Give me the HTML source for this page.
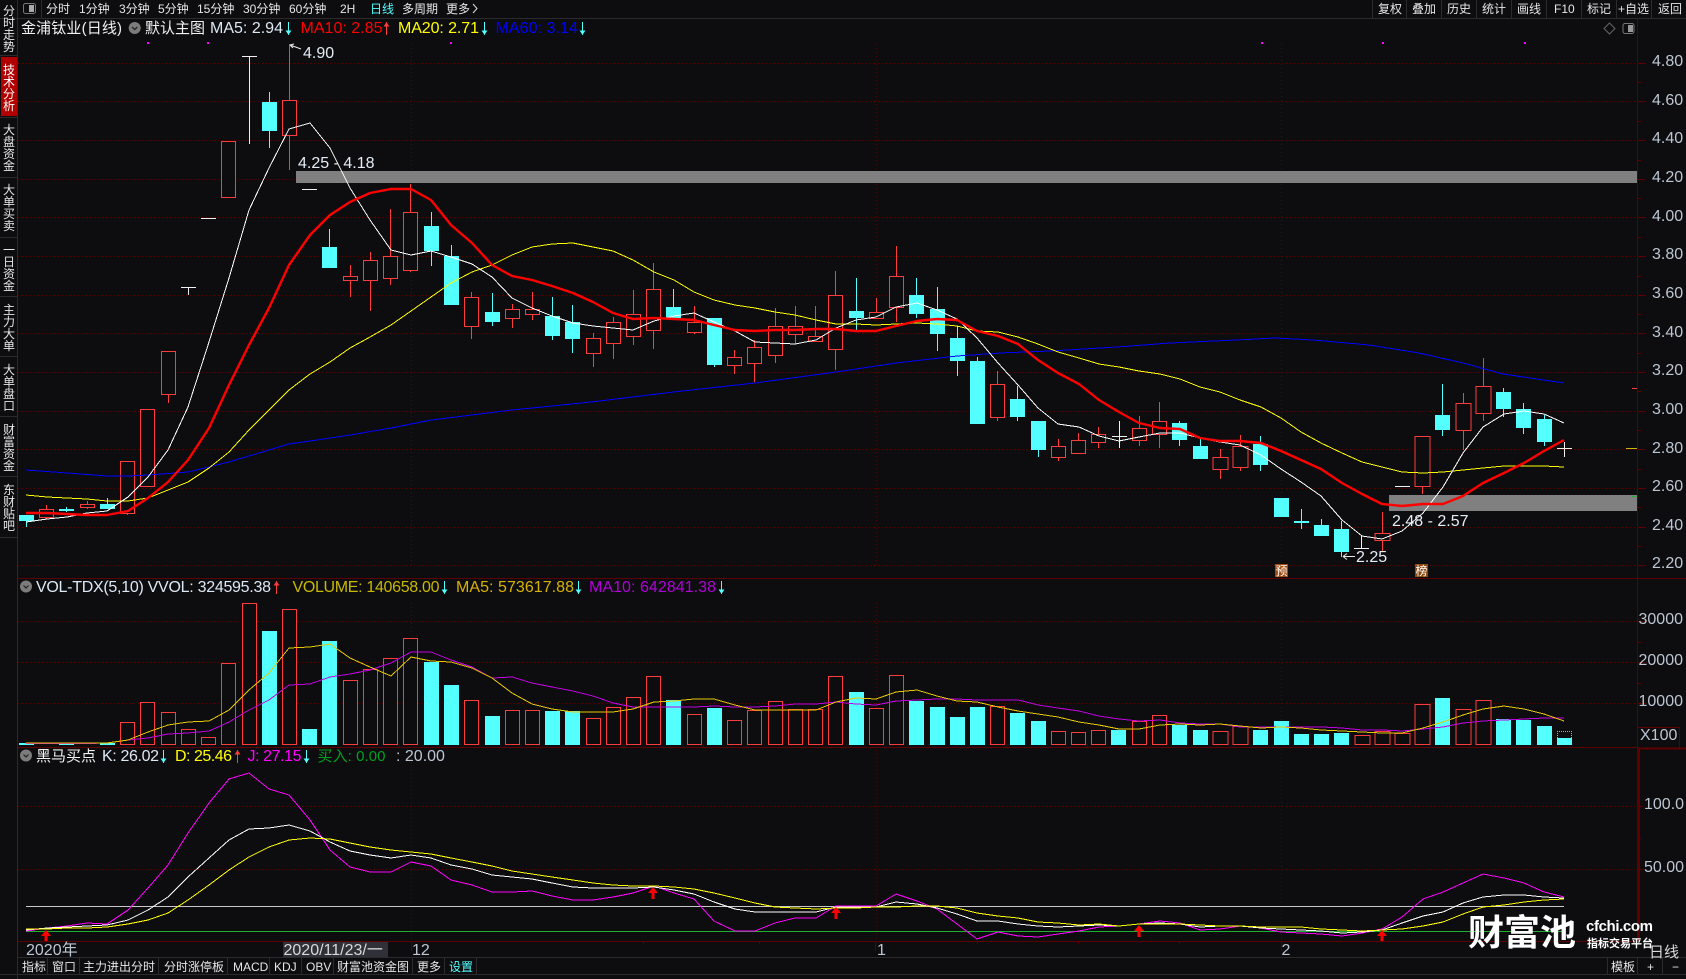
<!DOCTYPE html>
<html lang="zh"><head><meta charset="utf-8"><title>金浦钛业(日线)</title>
<style>
html,body{margin:0;padding:0;background:#0d0d10;width:1686px;height:979px;overflow:hidden}
svg{display:block;position:absolute;left:0;top:0}
text{font-family:"Liberation Sans","WenQuanYi Zen Hei","Noto Sans CJK SC",sans-serif;font-size:16px;white-space:pre}
.c{font-size:12px;fill:#e6e6e6}
.a{fill:#bcc6d2}
.s{font-size:12px;fill:#e6e6e6}
</style></head><body>
<svg width="1686" height="979" viewBox="0 0 1686 979">
<rect width="1686" height="979" fill="#0d0d10"/>

<!-- grid -->
<g stroke="#5c0000" stroke-width="1" stroke-dasharray="1 3" fill="none" shape-rendering="crispEdges">
<path d="M18 63.5H1637M18 101.5H1637M18 140.5H1637M18 179.5H1637M18 217.5H1637M18 256.5H1637M18 295.5H1637M18 333.5H1637M18 372.5H1637M18 411.5H1637M18 449.5H1637M18 488.5H1637M18 527.5H1637M18 565.5H1637"/>
<path d="M18 621.5H1637M18 662.5H1637M18 703.5H1637M18 806.5H1637M18 869.5H1637"/>
<path d="M411.5 44V566M876.5 44V566M1281.5 44V566M411.5 603V745M876.5 603V745M1281.5 603V745M411.5 750V941M876.5 750V941M1281.5 750V941"/>
</g>

<!-- frame lines -->
<g fill="none" shape-rendering="crispEdges">
<path stroke="#5c0000" d="M17 578.5H1686M17 747.5H1638M17 941.5H1638M1637.5 19V941"/>
<path stroke="#600000" stroke-width="2" d="M1639 748V941M1639 748.5H1686"/>
<path stroke="#5c0000" d="M1638 63.5h7M1638 101.5h7M1638 140.5h7M1638 179.5h7M1638 217.5h7M1638 256.5h7M1638 295.5h7M1638 333.5h7M1638 372.5h7M1638 411.5h7M1638 449.5h7M1638 488.5h7M1638 527.5h7M1638 565.5h7M1638 82.5h3M1638 121.5h3M1638 160.5h3M1638 198.5h3M1638 237.5h3M1638 276.5h3M1638 314.5h3M1638 353.5h3M1638 391.5h3M1638 430.5h3M1638 469.5h3M1638 507.5h3M1638 546.5h3M1638 621.5h7M1638 662.5h7M1638 703.5h7M1638 642.5h3M1638 683.5h3M1638 806.5h5M1638 869.5h5M1638 838.5h3M643.5 941v3M759.5 941v3M875.5 941v10M977.5 941v3M1078.5 941v3M1179.5 941v3M411.5 941v10M1281.5 941v10"/>
<path stroke="#5c0000" d="M1638 727.5h41.5v20"/>
<path stroke="#2b2b2e" d="M0 18.5H1686M18 957.5H1686M0 974.5H1686M17.5 0V979M41.5 0V18M1372.5 0V18M1406.5 0V18M1441.5 0V18M1476.5 0V18M1511.5 0V18M1546.5 0V18M1581.5 0V18M1616.5 0V18M1651.5 0V18M47.5 957V974M79.5 957V974M158.5 957V974M227.5 957V974M269.5 957V974M301.5 957V974M333.5 957V974M412.5 957V974M444.5 957V974M476.5 957V974M1607.5 957V974M1637.5 957V974M1662.5 957V974M0 55.5H17M0 117.5H17M0 177.5H17M0 237.5H17M0 296.5H17M0 356.5H17M0 416.5H17M0 476.5H17M0 537.5H17"/>
</g>

<!-- gray bands -->
<rect x="296" y="171" width="1341" height="12" fill="#808080"/>
<rect x="1389" y="495" width="248" height="16" fill="#808080"/>

<!-- side marks -->
<g shape-rendering="crispEdges">
<rect x="1632" y="388" width="5" height="1" fill="#ff3c3c"/>
<rect x="1626" y="448" width="11" height="1" fill="#c8b800"/>
<rect x="1632" y="496" width="5" height="1" fill="#20b040"/>
<rect x="147" y="42" width="2" height="2" fill="#ff00ff"/><rect x="207" y="42" width="2" height="2" fill="#ff00ff"/><rect x="450" y="42" width="2" height="2" fill="#ff00ff"/><rect x="1261" y="42" width="2" height="2" fill="#ff00ff"/><rect x="1382" y="42" width="2" height="2" fill="#ff00ff"/><rect x="1524" y="42" width="2" height="2" fill="#ff00ff"/>
</g>

<!-- candles: wicks -->
<g fill="none" shape-rendering="crispEdges">
<path stroke="#ff3c3c" d="M46.5 505V519M87.5 501V509M127.5 461V515M168.5 351V403M289.5 44V170M350.5 265V297M370.5 252V311M390.5 209V285M410.5 184V272M471.5 292V339M512.5 304V328M532.5 292V320M593.5 333V367M613.5 317V359M633.5 290V345M653.5 263V349M694.5 306V334M734.5 350V374M754.5 340V382M775.5 308V363M795.5 306V344M815.5 306V342M835.5 271V370M876.5 298V319M896.5 246V322M997.5 371V421M1058.5 439V461M1078.5 433V454M1098.5 427V448M1139.5 416V446M1159.5 402V448M1220.5 449V479M1240.5 435V471M1382.5 512V551M1422.5 436V494M1463.5 393V450M1483.5 358V421"/>
<path stroke="#54ffff" d="M26.5 515V527M66.5 507V512M107.5 498V509M269.5 92V148M329.5 229V268M431.5 212V266M451.5 245V305M492.5 293V326M552.5 297V340M572.5 305V353M673.5 289V318M714.5 318V367M856.5 278V330M916.5 278V318M937.5 287V351M957.5 326V376M977.5 357V424M1017.5 386V421M1038.5 421V457M1179.5 421V446M1200.5 439V459M1260.5 436V471M1301.5 509V529M1321.5 519V536M1341.5 521V557M1442.5 384V436M1503.5 388V417M1523.5 403V434M1544.5 415V446"/>
<path stroke="#f0f0f0" d="M181 287.5H196M188.5 287V295M201 218.5H216M242 56.5H257M249.5 56V144M302 189.5H317M1112 436.5H1127M1119.5 421V448M1354 548.5H1369M1361.5 535V549M1395 486.5H1410M1557 448.5H1572M1564.5 442V457"/>
</g>
<!-- red bodies -->
<path fill="#0d0d10" stroke="#ff3c3c" shape-rendering="crispEdges" d="M39.5 509.5h14v8h-14zM80.5 504.5h14v3h-14zM120.5 461.5h14v52h-14zM140.5 409.5h14v77h-14zM161.5 351.5h14v43h-14zM221.5 141.5h14v56h-14zM282.5 100.5h14v35h-14zM343.5 276.5h14v4h-14zM363.5 260.5h14v20h-14zM383.5 256.5h14v22h-14zM403.5 212.5h14v58h-14zM464.5 297.5h14v29h-14zM505.5 309.5h14v9h-14zM525.5 309.5h14v5h-14zM586.5 338.5h14v15h-14zM606.5 322.5h14v21h-14zM626.5 314.5h14v22h-14zM646.5 289.5h14v41h-14zM687.5 322.5h14v10h-14zM727.5 357.5h14v8h-14zM747.5 347.5h14v16h-14zM768.5 326.5h14v29h-14zM788.5 326.5h14v8h-14zM808.5 336.5h14v5h-14zM828.5 295.5h14v54h-14zM869.5 312.5h14v6h-14zM889.5 276.5h14v31h-14zM990.5 384.5h14v33h-14zM1051.5 446.5h14v11h-14zM1071.5 440.5h14v13h-14zM1091.5 434.5h14v8h-14zM1132.5 428.5h14v12h-14zM1152.5 421.5h14v13h-14zM1213 457.5h15v12h-15zM1233 446.5h15v21h-15zM1375 533.5h15v7h-15zM1415 436.5h15v50h-15zM1456 403.5h15v27h-15zM1476 386.5h15v27h-15z"/>
<!-- cyan bodies -->
<path fill="#54ffff" shape-rendering="crispEdges" d="M19 515h15v6h-15zM59 509h15v2h-15zM100 504h15v5h-15zM262 102h15v29h-15zM322 247h15v21h-15zM424 226h15v25h-15zM444 256h15v49h-15zM485 312h15v10h-15zM545 316h15v20h-15zM565 322h15v17h-15zM666 307h15v11h-15zM707 318h15v47h-15zM849 311h15v7h-15zM909 295h15v19h-15zM930 309h15v25h-15zM950 338h15v23h-15zM970 361h15v63h-15zM1010 399h15v18h-15zM1031 421h15v29h-15zM1172 423h15v17h-15zM1193 446h15v13h-15zM1253 444h15v21h-15zM1274 498h15v19h-15zM1294 521h15v2h-15zM1314 525h15v11h-15zM1334 529h15v23h-15zM1435 415h15v15h-15zM1496 392h15v17h-15zM1516 409h15v19h-15zM1537 419h15v23h-15z"/>

<!-- MAs -->
<g fill="none" stroke-linejoin="round" shape-rendering="crispEdges">
<polyline stroke="#0000ff" stroke-width="1" points="26,470 67,473 107,476 128,476 148,475 188,472 229,462 269,450 289,444 310,441 350,435 391,428 431,420 472,415 512,410 552,406 600,401 673,392 755,383 836,372 896,363 957,356 1000,353 1050,351 1117,347 1170,343 1236,340 1275,338 1313,340 1369,345 1419,353 1463,363 1503,374 1564,383"/>
<polyline stroke="#ffff00" stroke-width="1" points="26,495 47,497 67,498 87,499 107,501 128,501 148,498 168,490 188,482 209,468 229,452 249,430 269,410 289,390 310,374 330,362 350,348 370,337 391,325 411,311 431,297 451,283 472,272 492,265 512,255 532,247 552,244 573,243 593,247 613,251 633,260 654,272 674,280 694,292 714,300 735,305 755,308 775,312 795,315 816,320 836,324 856,324 876,325 896,324 917,323 937,324 957,326 977,331 998,332 1018,337 1038,344 1058,352 1079,358 1099,364 1119,367 1139,371 1160,374 1180,379 1200,387 1220,392 1240,400 1261,407 1281,418 1301,432 1321,443 1342,453 1362,462 1382,467 1402,472 1423,473 1443,472 1463,470 1483,468 1504,466 1524,466 1544,466 1564,467"/>
<polyline stroke="#ffffff" stroke-width="1" points="26,522 47,519 67,517 87,513 107,511 128,497 148,477 168,450 188,407 209,342 229,278 249,210 269,168 289,129 310,123 330,148 350,188 370,220 391,250 411,255 431,251 451,257 472,264 492,277 512,298 532,308 552,316 573,323 593,326 613,328 633,330 654,321 674,316 694,313 714,322 735,331 755,342 775,343 795,344 816,340 836,328 856,320 876,317 896,307 917,303 937,310 957,319 977,338 998,363 1018,385 1038,408 1058,424 1079,427 1099,436 1119,441 1139,437 1160,433 1180,433 1200,438 1220,442 1240,445 1261,455 1281,469 1301,482 1321,496 1342,520 1362,536 1382,539 1402,531 1423,513 1443,487 1463,453 1483,427 1504,414 1524,411 1544,414 1564,423"/>
</g>
<polyline fill="none" stroke-linejoin="round" stroke="#ff0000" stroke-width="2.4" points="26,513 47,513 67,514 87,515 107,515 128,511 148,498 168,482 188,460 209,428 229,385 249,345 269,308 289,265 310,235 330,215 350,202 370,193 391,189 411,189 431,200 451,225 472,243 492,265 512,276 532,280 552,286 573,293 593,302 613,313 633,319 654,318 674,319 694,320 714,325 735,330 755,331 775,330 795,330 816,329 836,329 856,331 876,331 896,326 917,321 937,319 957,320 977,331 998,336 1018,344 1038,360 1058,373 1079,384 1099,400 1119,412 1139,423 1160,428 1180,429 1200,438 1220,441 1240,441 1261,443 1281,451 1301,460 1321,469 1342,483 1362,494 1382,504 1402,506 1423,504 1443,504 1463,496 1483,483 1504,473 1524,463 1544,451 1564,440"/>

<!-- price callouts -->
<g fill="none" stroke="#e8e8e8" stroke-width="1"><path d="M290 45L301 49M290 45l4 -1M290 45l3 3"/><path d="M1343 556.5H1355M1343 556.5l4 -3M1343 556.5l4 3"/></g>
<g fill="#e4ecf4">
<text x="303" y="58">4.90</text>
<text x="298" y="168">4.25 - 4.18</text>
<text x="1392" y="526">2.48 - 2.57</text>
<text x="1356" y="562">2.25</text>
</g>
<rect x="1275" y="564" width="13" height="13" fill="#a04a10"/><rect x="1415" y="564" width="13" height="13" fill="#8c4a10"/>
<text class="c" x="1275.5" y="575" style="fill:#fff">预</text><text class="c" x="1415.5" y="575" style="fill:#fff">榜</text>

<!-- volume bars -->
<path fill="#0d0d10" stroke="#ff3c3c" shape-rendering="crispEdges" d="M120.5 722.5h14v22h-14zM140.5 702.5h14v42h-14zM161.5 712.5h14v32h-14zM181.5 729.5h14v15h-14zM201.5 737.5h14v7h-14zM221.5 663.5h14v81h-14zM242.5 603.5h14v141h-14zM282.5 609.5h14v135h-14zM343.5 680.5h14v64h-14zM363.5 669.5h14v75h-14zM383.5 658.5h14v86h-14zM403.5 638.5h14v106h-14zM464.5 700.5h14v44h-14zM505.5 710.5h14v34h-14zM525.5 710.5h14v34h-14zM586.5 718.5h14v26h-14zM606.5 707.5h14v37h-14zM626.5 697.5h14v47h-14zM646.5 676.5h14v68h-14zM687.5 714.5h14v30h-14zM727.5 720.5h14v24h-14zM747.5 710.5h14v34h-14zM768.5 701.5h14v43h-14zM788.5 709.5h14v35h-14zM808.5 709.5h14v35h-14zM828.5 676.5h14v68h-14zM869.5 708.5h14v36h-14zM889.5 675.5h14v69h-14zM990.5 706.5h14v38h-14zM1051.5 731.5h14v13h-14zM1071.5 732.5h14v12h-14zM1091.5 730.5h14v14h-14zM1132.5 721.5h14v23h-14zM1152.5 715.5h14v29h-14zM1213 731.5h15v13h-15zM1233 726.5h15v18h-15zM1355 735.5h15v9h-15zM1375 731.5h15v13h-15zM1395 733.5h15v11h-15zM1415 704.5h15v40h-15zM1456 709.5h15v35h-15zM1476 700.5h15v44h-15z"/>
<path fill="#54ffff" shape-rendering="crispEdges" d="M19 743h15v2h-15zM59 743.5h15v1.5h-15zM100 743h15v2h-15zM262 631h15v114h-15zM302 729h15v16h-15zM322 641h15v104h-15zM424 662h15v83h-15zM444 685h15v60h-15zM485 716h15v29h-15zM545 711h15v34h-15zM565 711h15v34h-15zM666 700h15v45h-15zM707 708h15v37h-15zM849 692h15v53h-15zM909 701h15v44h-15zM930 707h15v38h-15zM950 717h15v28h-15zM970 707h15v38h-15zM1010 713h15v32h-15zM1031 721h15v24h-15zM1111 730h15v15h-15zM1172 725h15v20h-15zM1193 730h15v15h-15zM1253 730h15v15h-15zM1274 721h15v24h-15zM1294 734h15v11h-15zM1314 734h15v11h-15zM1334 733h15v12h-15zM1435 698h15v47h-15zM1496 719h15v26h-15zM1516 720h15v25h-15zM1537 726h15v19h-15zM1557 738h15v7h-15z"/>
<path fill="none" stroke="#c8b800" stroke-dasharray="1 1" shape-rendering="crispEdges" d="M1557.5 738V731.5H1571.5V738"/>
<g fill="none" stroke-linejoin="round" stroke-width="1" shape-rendering="crispEdges">
<polyline stroke="#c000e0" points="26,743.5 47,743.5 67,743.5 87,743.5 107,743 128,740 148,738 168,734 188,733 209,731 229,722 249,710 269,700 289,685 310,684 330,677 350,674 370,670 391,663 411,652 431,652 451,660 472,667 492,678 512,677 532,683 552,687 573,691 593,696 613,703 633,707 654,707 674,707 694,707 714,706 735,707 755,707 775,706 795,704 816,704 836,702 856,704 876,705 896,701 917,700 937,699 957,699 977,700 998,700 1018,700 1038,705 1058,708 1079,711 1099,716 1119,719 1139,721 1160,720 1180,723 1200,724 1220,724 1240,727 1261,727 1281,727 1301,727 1321,727 1342,728 1362,730 1382,730 1402,731 1423,729 1443,727 1463,723 1483,721 1504,720 1524,719 1544,718 1564,718"/>
<polyline stroke="#e6c800" points="26,743 47,743 67,743 87,743 107,743 128,740 148,732 168,725 188,722 209,721 229,710 249,690 269,673 289,648 310,647 330,644 350,658 370,667 391,676 411,657 431,661 451,662 472,668 492,678 512,693 532,704 552,709 573,712 593,712 613,712 633,709 654,702 674,701 694,699 714,699 735,705 755,710 775,710 795,710 816,710 836,702 856,698 876,699 896,692 917,690 937,696 957,701 977,702 998,707 1018,711 1038,714 1058,717 1079,722 1099,725 1119,729 1139,729 1160,725 1180,724 1200,725 1220,724 1240,726 1261,728 1281,727 1301,728 1321,730 1342,731 1362,732 1382,733 1402,733 1423,728 1443,722 1463,715 1483,709 1504,706 1524,709 1544,714 1564,721"/>
</g>

<!-- KDJ -->
<path stroke="#c8c8c8" stroke-width="1" shape-rendering="crispEdges" d="M26 906.5H1564"/>
<path stroke="#20b030" stroke-width="1" shape-rendering="crispEdges" d="M26 931.5H1564"/>
<g fill="none" stroke-linejoin="round" stroke-width="1" shape-rendering="crispEdges">
<polyline stroke="#ff00ff" points="26,931 47,928 67,926 87,923 107,924 128,910 148,888 168,865 188,833 209,803 229,779 249,773 269,789 289,795 310,820 330,850 350,867 370,872 391,872 411,862 431,866 451,880 472,885 492,892 512,892 532,891 552,896 573,900 593,900 613,897 633,893 654,886 674,893 694,899 714,921 735,931 755,931 775,923 795,918 816,918 836,906 856,906 876,906 896,894 917,901 937,909 957,924 977,939 998,932 1018,936 1038,937 1058,934 1079,931 1099,927 1119,926 1139,924 1160,921 1180,923 1200,930 1220,929 1240,926 1261,928 1281,932 1301,933 1321,934 1342,936 1362,933 1382,929 1402,917 1423,899 1443,892 1463,883 1483,874 1504,878 1524,883 1544,892 1564,897"/>
<polyline stroke="#ffffff" points="26,930 47,928 67,927 87,926 107,925 128,920 148,910 168,897 188,877 209,858 229,840 249,829 269,828 289,825 310,831 330,842 350,851 370,855 391,858 411,855 431,858 451,865 472,869 492,875 512,877 532,879 552,883 573,887 593,888 613,888 633,888 654,887 674,890 694,894 714,902 735,909 755,912 775,912 795,912 816,912 836,907 856,907 876,907 896,902 917,904 937,908 957,914 977,921 998,921 1018,924 1038,926 1058,927 1079,926 1099,925 1119,926 1139,924 1160,923 1180,924 1200,927 1220,926 1240,926 1261,928 1281,929 1301,930 1321,931 1342,933 1362,932 1382,930 1402,923 1423,916 1443,912 1463,903 1483,897 1504,895 1524,895 1544,897 1564,898"/>
<polyline stroke="#ffff00" points="26,929 47,929 67,928 87,928 107,927 128,924 148,920 168,913 188,900 209,885 229,870 249,857 269,847 289,840 310,838 330,839 350,843 370,847 391,850 411,852 431,854 451,858 472,862 492,866 512,871 532,874 552,877 573,880 593,883 613,885 633,886 654,886 674,887 694,889 714,893 735,898 755,903 775,907 795,908 816,909 836,908 856,908 876,907 896,907 917,906 937,906 957,908 977,913 998,916 1018,918 1038,922 1058,923 1079,925 1099,924 1119,926 1139,924 1160,924 1180,924 1200,925 1220,926 1240,926 1261,927 1281,927 1301,927 1321,929 1342,930 1362,931 1382,930 1402,929 1423,926 1443,922 1463,914 1483,907 1504,905 1524,902 1544,900 1564,899"/>
</g>
<path fill="#ff0000" d="M46 930l5 6h-3.500v5h-3v-5h-3.500zM653 887l5 6h-3.500v6h-3v-6h-3.500zM836 907l5 6h-3.500v6h-3v-6h-3.500zM1139 925l5 6h-3.500v6h-3v-6h-3.500zM1382 930l5 6h-3.500v5h-3v-5h-3.500z"/>

<!-- top toolbar -->
<rect x="23.500" y="3.500" width="12" height="10" rx="2" fill="none" stroke="#777"/><rect x="29" y="5" width="5" height="7" fill="#aaa"/>
<g class="tb">
<text class="c" x="46" y="13">分时</text><text class="c" x="79" y="13">1分钟</text><text class="c" x="119" y="13">3分钟</text><text class="c" x="158" y="13">5分钟</text><text class="c" x="197" y="13">15分钟</text><text class="c" x="243" y="13">30分钟</text><text class="c" x="289" y="13">60分钟</text><text class="c" x="340" y="13">2H</text><text class="c" x="370" y="13" style="fill:#54ffff">日线</text><text class="c" x="402" y="13">多周期</text><text class="c" x="446" y="13">更多</text>
<path d="M473 4l4 4.500l-4 4.500" fill="none" stroke="#ddd"/>
<text class="c" x="1378" y="13">复权</text><text class="c" x="1412" y="13">叠加</text><text class="c" x="1447" y="13">历史</text><text class="c" x="1482" y="13">统计</text><text class="c" x="1517" y="13">画线</text><text class="c" x="1554" y="13">F10</text><text class="c" x="1587" y="13">标记</text><text class="c" x="1618" y="13">+自选</text><text class="c" x="1658" y="13">返回</text>
</g>
<path d="M1609.500 23l5.500 5.500l-5.500 5.500l-5.500-5.500z" fill="none" stroke="#666"/>
<rect x="1623" y="23.500" width="11" height="10" rx="2" fill="none" stroke="#777"/><rect x="1628" y="25" width="5" height="7" fill="#999"/>

<!-- main title -->
<text x="21" y="33" textLength="101" style="font-size:15px;fill:#f0f0f0">金浦钛业(日线)</text>
<circle cx="134.700" cy="28" r="6" fill="#7c7c7c"/><path d="M132 27l2.700 2.500l2.700-2.500" fill="none" stroke="#222" stroke-width="1.200"/>
<text x="145" y="33" style="font-size:15px;fill:#f0f0f0">默认主图</text>
<text x="210" y="33" textLength="73" style="fill:#dce8f4">MA5: 2.94</text>
<text x="300.500" y="33" textLength="82" style="fill:#ff0000">MA10: 2.85</text>
<text x="398" y="33" textLength="81" style="fill:#ffff00">MA20: 2.71</text>
<text x="495.500" y="33" textLength="82.500" style="fill:#0000ff">MA60: 3.14</text>
<path stroke="#54ffff" fill="#54ffff" d="M288.500 22V35M286.500 31h4l-2 3zM484.500 22V35M482.500 31h4l-2 3zM582.500 22V35M580.500 31h4l-2 3z"/>
<path stroke="#ff3c3c" fill="#ff3c3c" d="M386.500 22V35M384.500 26h4l-2-3z"/>

<!-- vol title -->
<circle cx="26" cy="586.500" r="6" fill="#7c7c7c"/><path d="M23.500 585.500l2.500 2.500l2.500-2.500" fill="none" stroke="#222" stroke-width="1.200"/>
<text x="36" y="592" textLength="235" style="fill:#dce8f4">VOL-TDX(5,10) VVOL: 324595.38</text>
<text x="292.500" y="592" textLength="147" style="fill:#c8b800">VOLUME: 140658.00</text>
<text x="456" y="592" textLength="118" style="fill:#d8b400">MA5: 573617.88</text>
<text x="589" y="592" textLength="127" style="fill:#b000d8">MA10: 642841.38</text>
<path stroke="#ff3c3c" fill="#ff3c3c" d="M276.500 581V594M274.500 585h4l-2-3z"/>
<path stroke="#54ffff" fill="#54ffff" d="M444.500 581V594M442.500 590h4l-2 3zM578.500 581V594M576.500 590h4l-2 3zM721.500 581V594M719.500 590h4l-2 3z"/>

<!-- kdj title -->
<circle cx="26" cy="755.500" r="6" fill="#7c7c7c"/><path d="M23.500 754.500l2.500 2.500l2.500-2.500" fill="none" stroke="#222" stroke-width="1.200"/>
<text x="36" y="761" style="font-size:15px;fill:#f0f0f0">黑马买点</text>
<text x="102" y="761" textLength="57" style="fill:#dce8f4">K: 26.02</text>
<text x="175" y="761" textLength="57" style="fill:#ffff00">D: 25.46</text>
<text x="247.500" y="761" textLength="54" style="fill:#ff00ff">J: 27.15</text>
<text x="317.500" y="761" textLength="68" style="fill:#00a020;font-size:15px">买入: 0.00</text>
<text x="396" y="761" style="fill:#bcc6d2">: 20.00</text>
<path stroke="#54ffff" fill="#54ffff" d="M163.500 750V763M161.500 759h4l-2 3zM306.500 750V763M304.500 759h4l-2 3z"/>
<path stroke="#ff3c3c" fill="#ff3c3c" d="M237.500 750V763M235.500 754h4l-2-3z"/>

<!-- axis labels -->
<g class="ax">
<text class="a" x="1652" y="66">4.80</text><text class="a" x="1652" y="105">4.60</text><text class="a" x="1652" y="143">4.40</text><text class="a" x="1652" y="182">4.20</text><text class="a" x="1652" y="221">4.00</text><text class="a" x="1652" y="259">3.80</text><text class="a" x="1652" y="298">3.60</text><text class="a" x="1652" y="337">3.40</text><text class="a" x="1652" y="375">3.20</text><text class="a" x="1652" y="414">3.00</text><text class="a" x="1652" y="453">2.80</text><text class="a" x="1652" y="491">2.60</text><text class="a" x="1652" y="530">2.40</text><text class="a" x="1652" y="568">2.20</text>
<text class="a" x="1638.500" y="624">30000</text><text class="a" x="1638.500" y="665">20000</text><text class="a" x="1638.500" y="706">10000</text><text class="a" x="1640" y="740">X100</text>
<text class="a" x="1644" y="809">100.0</text><text class="a" x="1644" y="872">50.00</text>
</g>

<!-- x axis -->
<rect x="283" y="942" width="105" height="15" fill="#303038"/>
<text class="a" x="26" y="955">2020年</text>
<text x="283.500" y="955" style="fill:#d8d8d8">2020/11/23/一</text>
<text class="a" x="412" y="955">12</text><text class="a" x="877" y="955">1</text><text class="a" x="1281.500" y="955">2</text>

<!-- sidebar -->
<rect x="1" y="57" width="16" height="59" fill="#b00000"/>
<g>
<text class="s" x="3" y="15">分</text><text class="s" x="3" y="27">时</text><text class="s" x="3" y="39">走</text><text class="s" x="3" y="51">势</text>
<text class="s" x="3" y="74" style="fill:#fff">技</text><text class="s" x="3" y="86" style="fill:#fff">术</text><text class="s" x="3" y="98" style="fill:#fff">分</text><text class="s" x="3" y="110" style="fill:#fff">析</text>
<text class="s" x="3" y="134">大</text><text class="s" x="3" y="146">盘</text><text class="s" x="3" y="158">资</text><text class="s" x="3" y="170">金</text>
<text class="s" x="3" y="194">大</text><text class="s" x="3" y="206">单</text><text class="s" x="3" y="218">买</text><text class="s" x="3" y="230">卖</text>
<text class="s" x="3" y="254">一</text><text class="s" x="3" y="266">日</text><text class="s" x="3" y="278">资</text><text class="s" x="3" y="290">金</text>
<text class="s" x="3" y="314">主</text><text class="s" x="3" y="326">力</text><text class="s" x="3" y="338">大</text><text class="s" x="3" y="350">单</text>
<text class="s" x="3" y="374">大</text><text class="s" x="3" y="386">单</text><text class="s" x="3" y="398">盘</text><text class="s" x="3" y="410">口</text>
<text class="s" x="3" y="434">财</text><text class="s" x="3" y="446">富</text><text class="s" x="3" y="458">资</text><text class="s" x="3" y="470">金</text>
<text class="s" x="3" y="494">东</text><text class="s" x="3" y="506">财</text><text class="s" x="3" y="518">贴</text><text class="s" x="3" y="530">吧</text>
</g>

<!-- bottom toolbar -->
<g>
<text class="c" x="22" y="971">指标</text><text class="c" x="52" y="971">窗口</text><text class="c" x="83" y="971">主力进出分时</text><text class="c" x="164" y="971">分时涨停板</text><text class="c" x="233" y="971">MACD</text><text class="c" x="274" y="971">KDJ</text><text class="c" x="306" y="971">OBV</text><text class="c" x="337" y="971">财富池资金图</text><text class="c" x="417" y="971">更多</text><text class="c" x="449" y="971" style="fill:#54ffff">设置</text>
<text class="c" x="1611" y="971">模板</text><text class="c" x="1647" y="971">+</text><text class="c" x="1672" y="971">−</text>
</g>

<!-- watermark -->
<text x="1468" y="945" style="font-size:36px;font-weight:bold;fill:#fff;font-family:'Noto Sans CJK SC','WenQuanYi Zen Hei',sans-serif">财富池</text>
<text x="1586" y="931" textLength="67" style="font-size:15px;font-weight:bold;fill:#fff">cfchi.com</text>
<text x="1587" y="947" style="font-size:11px;font-weight:bold;fill:#fff;font-family:'Noto Sans CJK SC','WenQuanYi Zen Hei',sans-serif">指标交易平台</text>
<text x="1649" y="957" style="font-size:15px;fill:#d8d8d8">日线</text>
</svg>
</body></html>
